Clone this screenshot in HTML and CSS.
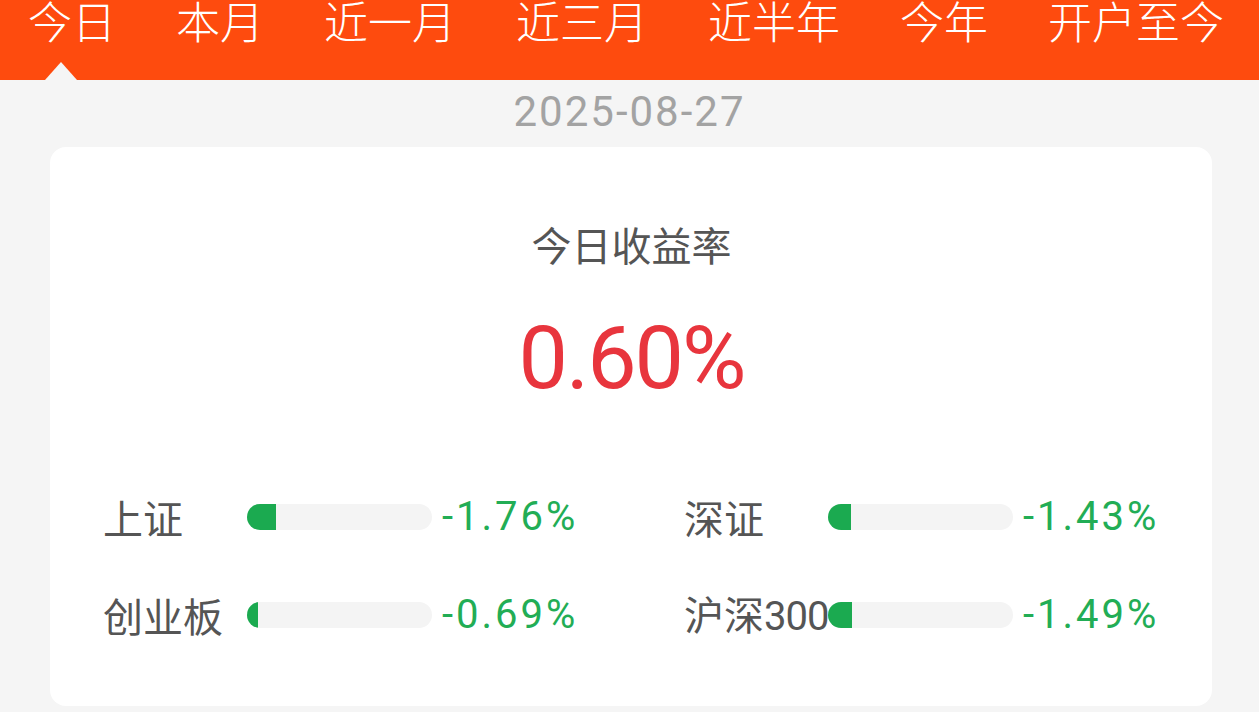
FILE: index.html
```html
<!DOCTYPE html>
<html lang="zh-CN">
<head>
<meta charset="utf-8">
<title>今日收益率</title>
<link rel="stylesheet" href="styles.css">
</head>
<body>
<header class="tabs">
  <span class="tab active">今日</span>
  <span class="tab">本月</span>
  <span class="tab">近一月</span>
  <span class="tab">近三月</span>
  <span class="tab">近半年</span>
  <span class="tab">今年</span>
  <span class="tab">开户至今</span>
</header>
<div class="date">2025-08-27</div>
<main class="card">
  <div class="title">今日收益率</div>
  <div class="rate">0.60%</div>
  <div class="indices">
    <div class="index">
      <span class="label">上证</span>
      <span class="bar"><span class="fill" style="width:29px"></span></span>
      <span class="value">-1.76%</span>
    </div>
    <div class="index">
      <span class="label">深证</span>
      <span class="bar"><span class="fill" style="width:23px"></span></span>
      <span class="value">-1.43%</span>
    </div>
    <div class="index">
      <span class="label">创业板</span>
      <span class="bar"><span class="fill" style="width:11px"></span></span>
      <span class="value">-0.69%</span>
    </div>
    <div class="index">
      <span class="label">沪深<span class="num">300</span></span>
      <span class="bar"><span class="fill" style="width:24px"></span></span>
      <span class="value">-1.49%</span>
    </div>
  </div>
</main>
</body>
</html>
```
FILE: styles.css
```css
html, body {
  margin: 0;
  padding: 0;
}
body {
  background: #f5f5f5;
  font-family: "Noto Sans CJK SC", "Noto Sans", sans-serif;
  width: 1259px;
  height: 712px;
  overflow: hidden;
}
.tabs {
  height: 80px;
  background: #fe4b0e;
  display: flex;
  align-items: flex-start;
  gap: 60px;
  padding-left: 28px;
  box-sizing: border-box;
}
.tab {
  position: relative;
  align-self: stretch;
  color: #ffffff;
  font-size: 44px;
  font-weight: 300;
  line-height: 40px;
  white-space: nowrap;
}
.tab.active::after {
  content: "";
  position: absolute;
  left: 17px;
  bottom: 0;
  width: 0;
  height: 0;
  border-left: 16px solid transparent;
  border-right: 16px solid transparent;
  border-bottom: 18px solid #f5f5f5;
}
.date {
  margin-top: 8px;
  text-align: center;
  font-family: Roboto, "Liberation Sans", sans-serif;
  font-size: 42px;
  line-height: 48px;
  color: #a3a3a3;
  letter-spacing: 2px;
}
.card {
  margin: 11px 47px 0 50px;
  background: #ffffff;
  border-radius: 16px;
  padding: 73px 52px 66px 53px;
  height: 559px;
  box-sizing: border-box;
}
.title {
  text-align: center;
  font-size: 40px;
  line-height: 48px;
  color: #555555;
}
.rate {
  margin-top: 41px;
  text-align: center;
  font-family: Roboto, "Liberation Sans", sans-serif;
  font-size: 88px;
  line-height: 97px;
  letter-spacing: -2px;
  color: #e8353d;
}
.indices {
  margin-top: 86px;
  display: grid;
  grid-template-columns: 1fr 1fr;
  column-gap: 105px;
  row-gap: 48px;
}
.index {
  display: flex;
  align-items: center;
  height: 50px;
}
.label {
  width: 144px;
  flex: none;
  font-size: 40px;
  line-height: 50px;
  color: #555555;
  white-space: nowrap;
}
.label .num {
  font-family: Roboto, "Liberation Sans", sans-serif;
  letter-spacing: -1px;
}
.bar {
  flex: none;
  width: 185px;
  height: 26px;
  border-radius: 13px;
  background: #f4f4f4;
  overflow: hidden;
  display: flex;
}
.fill {
  display: block;
  height: 100%;
  background: #1baa50;
}
.value {
  margin-left: 10px;
  font-family: Roboto, "Liberation Sans", sans-serif;
  font-size: 40px;
  line-height: 50px;
  color: #22ad55;
  letter-spacing: 3px;
  white-space: nowrap;
}
```
